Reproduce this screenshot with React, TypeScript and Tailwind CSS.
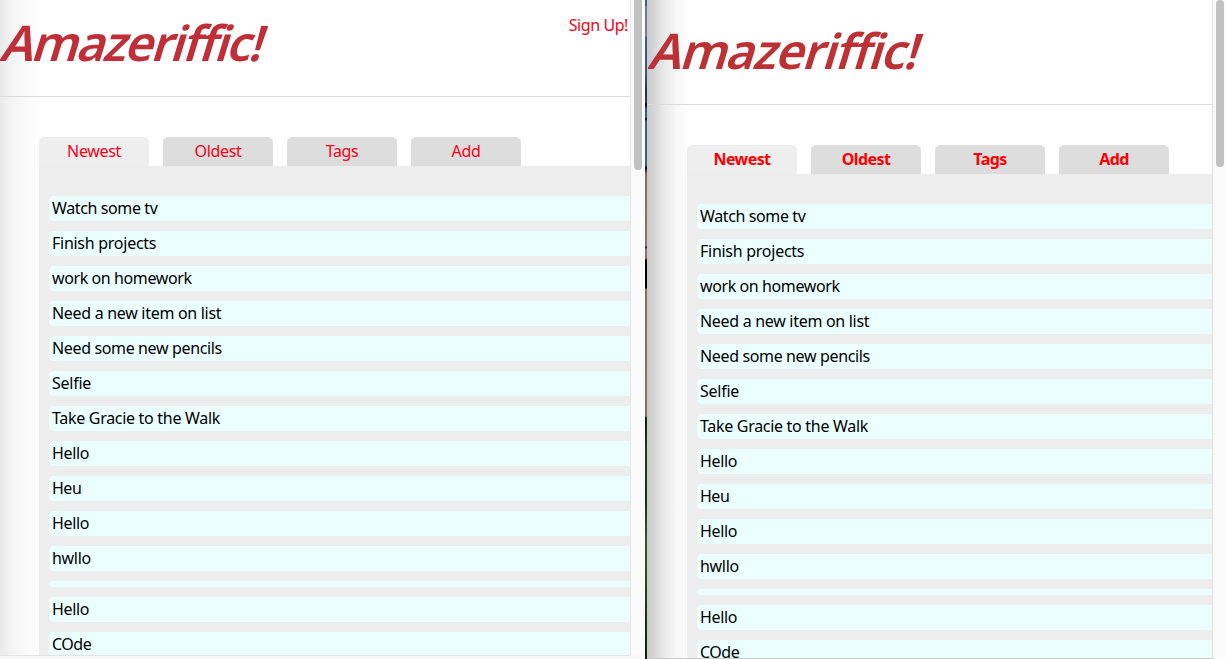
const tabs = ["Newest", "Oldest", "Tags", "Add"];

const todos = [
  { text: "Watch some tv", tracking: "tracking-[-0.38px]" },
  { text: "Finish projects", tracking: "tracking-[-0.27px]" },
  { text: "work on homework", tracking: "tracking-[-0.4px]" },
  { text: "Need a new item on list", tracking: "tracking-[-0.3px]" },
  { text: "Need some new pencils", tracking: "tracking-[-0.36px]" },
  { text: "Selfie", tracking: "tracking-[-0.25px]" },
  { text: "Take Gracie to the Walk", tracking: "tracking-[-0.3px]" },
  { text: "Hello", tracking: "tracking-[-0.35px]" },
  { text: "Heu", tracking: "tracking-[-0.5px]" },
  { text: "Hello", tracking: "tracking-[-0.35px]" },
  { text: "hwllo", tracking: "tracking-[-0.3px]" },
  { text: "", tracking: "" },
  { text: "Hello", tracking: "tracking-[-0.35px]" },
  { text: "COde", tracking: "tracking-[-0.5px]" },
];

function Page({ bold, signUp }: { bold: boolean; signUp: boolean }) {
  return (
    <div className="flex h-full w-full flex-col overflow-hidden">
      <header className="flex h-[97px] shrink-0 justify-between border-b border-[#dadada]">
        <h1 className={`mt-[7px] -ml-[6px] h-[70px] origin-bottom-left -skew-x-[17deg] whitespace-nowrap text-[49px] leading-[70px] font-semibold ${bold ? "tracking-[-1.4px] text-[#bd3034]" : "tracking-[-2.05px] text-[#c02f37]"}`}>
          Amazeriffic!
        </h1>
        {signUp && (
          <a className="mt-4 mr-[2px] whitespace-nowrap text-[16px] leading-[19px] tracking-[-0.42px] text-[#fa0016]">Sign Up!</a>
        )}
      </header>
      <nav className="mt-10 ml-[39px] flex shrink-0 gap-[14px]">
        {tabs.map((tab, i) => (
          <a
            key={tab}
            className={`h-[29px] w-[110px] shrink-0 rounded-t-[5px] text-center text-[16px] leading-[29px] ${i === 0 ? "bg-[#eeeeee]" : "bg-[#dddddd]"} ${bold ? "font-bold tracking-[-0.6px] text-[#ff0000]" : "tracking-[-0.35px] text-[#fa0016]"}`}
          >
            {tab}
          </a>
        ))}
      </nav>
      <main className="ml-[39px] flex grow flex-col gap-[10px] overflow-hidden bg-[#ededed] pt-[30px] pl-[10px]">
        {todos.map((todo, i) => (
          <p
            key={i}
            className={`shrink-0 rounded-l-[5px] bg-[#ebffff] pl-[3px] text-[16px] leading-[25px] whitespace-nowrap text-black ${todo.tracking} ${todo.text ? "h-[25px]" : "h-[6px]"}`}
          >
            {todo.text}
          </p>
        ))}
      </main>
    </div>
  );
}

export default function App() {
  return (
    <div className="flex h-[659px] w-[1225px] overflow-hidden bg-white font-['Noto_Sans',sans-serif]">
      <section className="flex w-[645px] shrink-0 flex-col bg-[#f8f8f8]">
        <div className="flex h-[655px]">
          <div className="h-full w-[630px] shrink-0 bg-[linear-gradient(90deg,#e9e9e9_0,#f3f3f3_10px,#fafafa_24px,#fff_42px)]">
            <Page bold={false} signUp />
          </div>
          <div className="w-[15px] border-l border-[#e7e7e7] bg-[#fafafa] pl-[3px]">
            <div className="h-[170px] w-2 rounded-b-full bg-[#c1c1c1]" />
          </div>
        </div>
        <div className="h-1 w-[630px] border-t border-[#e3e3e3] bg-[#f8f8f8]" />
      </section>
      <div className="w-[2px] shrink-0 bg-[linear-gradient(180deg,#3b5c9c_0,#3b5c9c_6px,#737c94_6px,#737c94_36px,#3b5c99_37px,#365391_75px,#203554_90px,#21375b_102px,#05080d_105px,#34538f_109px,#3b5c9c_117px,#05080d_119px,#3b5c9c_121px,#3b5c9c_165px,#05080d_168px,#806b60_174px,#89736a_246px,#171310_247px,#89736a_249px,#89736a_258px,#000_260px,#000_288px,#806b62_289px,#85716a_416px,#102008_418px,#243b14_450px,#1c3011_500px,#38561f_540px,#2b4718_580px,#1b2d10_625px,#101d0b_659px)]" />
      <section className="flex w-[578px] shrink-0">
        <div className="flex w-[565px] shrink-0 flex-col bg-[linear-gradient(90deg,#c9c9c9_0,#d9d9d9_9px,#ebebeb_18px,#f7f7f7_29px,#fff_43px)]">
          <div className="h-[658px] overflow-hidden pt-2 pl-px">
            <Page bold signUp={false} />
          </div>
          <div className="h-px bg-[#c9c9c9]" />
        </div>
        <div className="w-[13px] border-l border-[#dedede] bg-[#fafafa] pl-[3px]">
          <div className="h-[167px] w-2 rounded-full bg-[#c1c1c1]" />
        </div>
      </section>
    </div>
  );
}
